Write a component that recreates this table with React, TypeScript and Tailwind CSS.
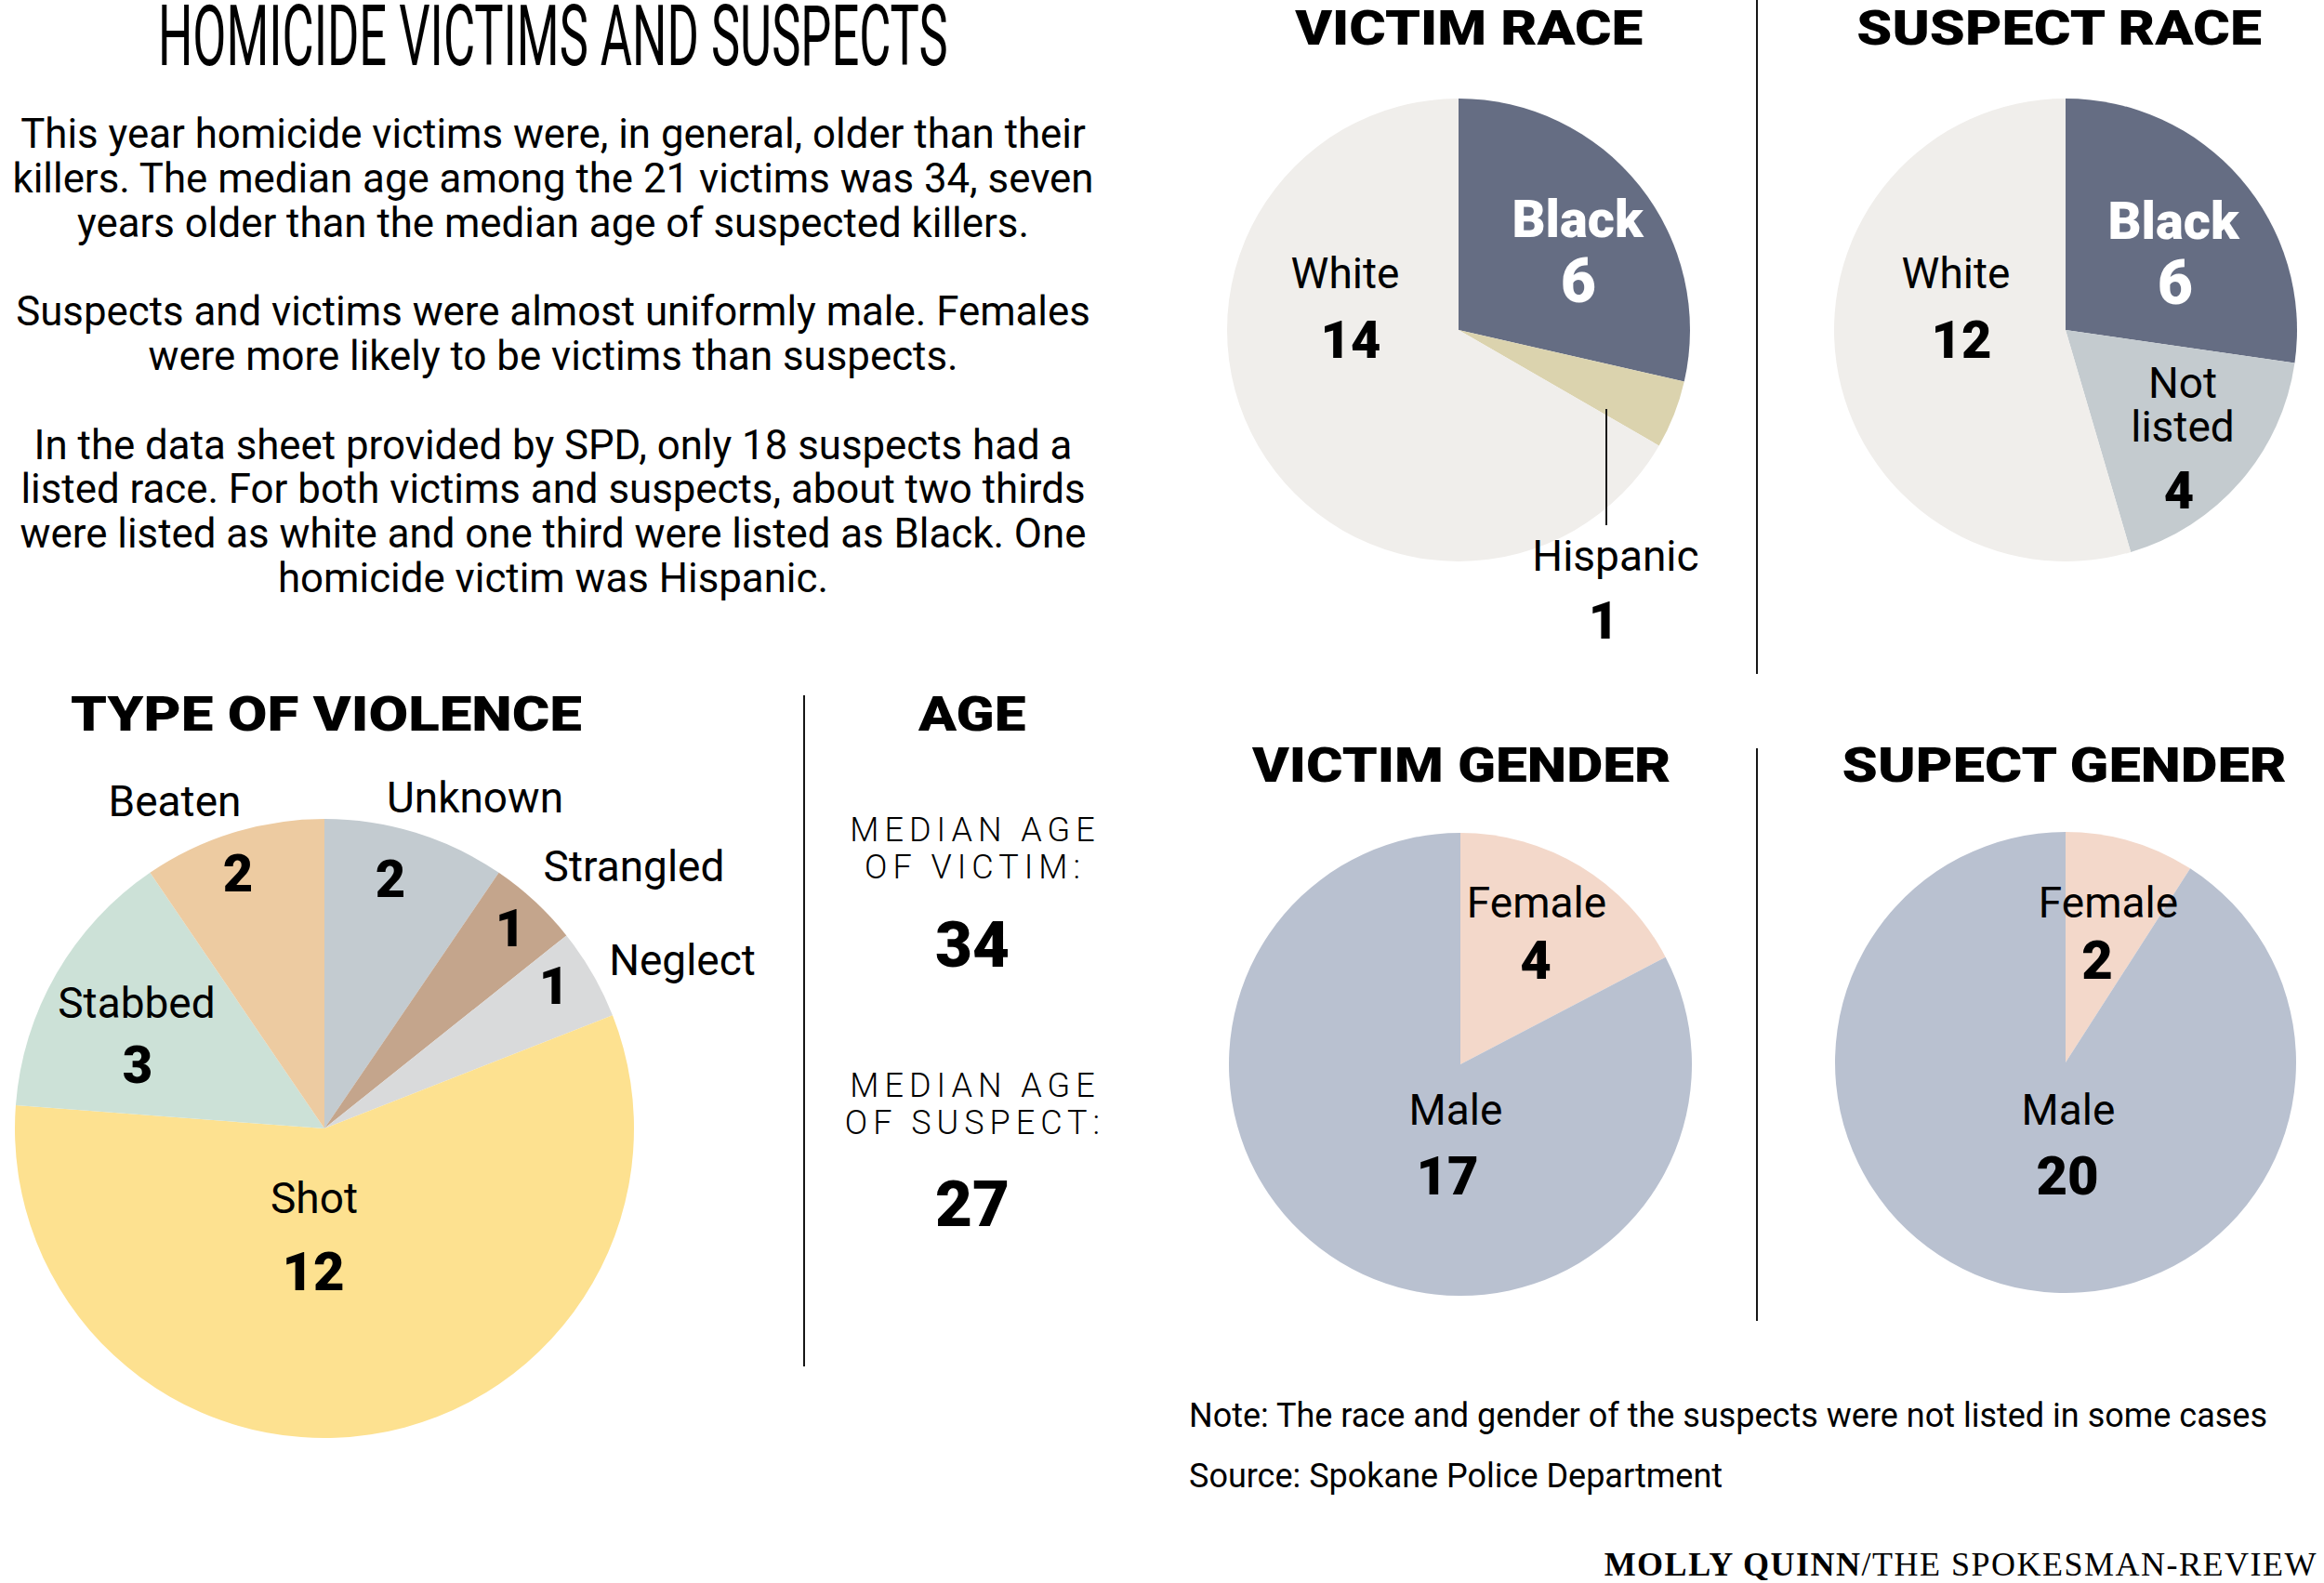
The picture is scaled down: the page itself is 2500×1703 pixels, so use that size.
import React from 'react'

type Slice = { deg: number; color: string }
type Label = { x: number; y: number; t: string | string[]; size?: number; bold?: boolean; white?: boolean }

const INK = '#161616'

function slicePath(cx: number, cy: number, r: number, a0: number, a1: number) {
  const rad = (a: number) => (a * Math.PI) / 180
  const x0 = cx + r * Math.sin(rad(a0))
  const y0 = cy - r * Math.cos(rad(a0))
  const x1 = cx + r * Math.sin(rad(a1))
  const y1 = cy - r * Math.cos(rad(a1))
  const large = a1 - a0 > 180 ? 1 : 0
  return `M${cx} ${cy}L${x0} ${y0}A${r} ${r} 0 ${large} 1 ${x1} ${y1}Z`
}

function PieChart({
  box,
  cx,
  cy,
  r,
  slices,
  labels,
  children,
}: {
  box: [number, number, number, number]
  cx: number
  cy: number
  r: number
  slices: Slice[]
  labels: Label[]
  children?: React.ReactNode
}) {
  let acc = 0
  return (
    <svg width={box[2]} height={box[3]} viewBox={box.join(' ')} className="block overflow-visible">
      {slices.map((s, i) => {
        const a0 = acc
        acc += s.deg
        return <path key={i} d={slicePath(cx, cy, r, a0, acc)} fill={s.color} />
      })}
      {children}
      {labels.map((l, i) => (
        <text
          key={i}
          x={l.x}
          y={l.y}
          textAnchor="middle"
          fontSize={l.size ?? (l.bold ? 56 : 46)}
          fontWeight={l.bold ? 900 : 400}
          fill={l.white ? '#ffffff' : '#000000'}
        >
          {Array.isArray(l.t)
            ? l.t.map((line, j) => (
                <tspan key={j} x={l.x} dy={j === 0 ? 0 : 47}>
                  {line}
                </tspan>
              ))
            : l.t}
        </text>
      ))}
    </svg>
  )
}

const u21 = 360 / 21
const u22 = 360 / 22

function Heading({ children, w, sx = 'scale-x-[1.16]' }: { children: React.ReactNode; w: string; sx?: string }) {
  return (
    <div className="flex justify-end">
      <h2 className={`${w} flex justify-center text-[52px] leading-[52px] font-black`}>
        <span className={`inline-block shrink-0 whitespace-nowrap ${sx}`}>{children}</span>
      </h2>
    </div>
  )
}

export default function App() {
  return (
    <div className="w-[2500px] h-[1703px] bg-white text-black flex overflow-hidden font-['Roboto','Noto_Sans',sans-serif]">
      {/* ── Left column ─────────────────────────────── */}
      <div className="w-[1190px] shrink-0 flex flex-col">
        <h1 className="h-[80px] flex justify-center text-[90px] leading-[80px] font-normal">
          <span className="inline-block shrink-0 whitespace-nowrap scale-x-[0.583]">HOMICIDE VICTIMS AND SUSPECTS</span>
        </h1>

        <div className="mt-[41px] text-[43.8px] leading-[47.8px] text-center whitespace-nowrap">
          <p>
            This year homicide victims were, in general, older than their
            <br />
            killers. The median age among the 21 victims was 34, seven
            <br />
            years older than the median age of suspected killers.
          </p>
          <p className="mt-[47.8px]">
            Suspects and victims were almost uniformly male. Females
            <br />
            were more likely to be victims than suspects.
          </p>
          <p className="mt-[47.8px]">
            In the data sheet provided by SPD, only 18 suspects had a
            <br />
            listed race. For both victims and suspects, about two thirds
            <br />
            were listed as white and one third were listed as Black. One
            <br />
            homicide victim was Hispanic.
          </p>
        </div>

        <div className="mt-[96px] flex">
          <div className="w-[864px] shrink-0 flex flex-col">
            <div className="flex">
              <Heading w="w-[702px]" sx="scale-x-[1.19]">
                TYPE OF VIOLENCE
              </Heading>
            </div>
            <div className="mt-[15px]">
              <PieChart
                box={[0, 810, 864, 745]}
                cx={349}
                cy={1214}
                r={333}
                slices={[
                  { deg: 2 * u21, color: '#c3cbd0' },
                  { deg: 1 * u21, color: '#c4a58c' },
                  { deg: 1 * u21, color: '#d9dadb' },
                  { deg: 12 * u21, color: '#fde190' },
                  { deg: 3 * u21, color: '#cce1d7' },
                  { deg: 2 * u21, color: '#edcba1' },
                ]}
                labels={[
                  { x: 188, y: 878, t: 'Beaten' },
                  { x: 256, y: 959, t: '2', bold: true },
                  { x: 511, y: 874, t: 'Unknown' },
                  { x: 420, y: 965, t: '2', bold: true },
                  { x: 682, y: 948, t: 'Strangled' },
                  { x: 549, y: 1018, t: '1', bold: true },
                  { x: 734, y: 1049, t: 'Neglect' },
                  { x: 596, y: 1080, t: '1', bold: true },
                  { x: 147, y: 1095, t: 'Stabbed' },
                  { x: 148, y: 1165, t: '3', bold: true },
                  { x: 338, y: 1305, t: 'Shot' },
                  { x: 337, y: 1388, t: '12', bold: true, size: 58 },
                ]}
              />
            </div>
          </div>

          <div className="w-[2px] h-[722px] mt-[5px] shrink-0 bg-[#161616]" />

          <div className="flex-1 flex justify-end">
            <div className="w-[288px] flex flex-col items-center text-center">
              <h2 className="w-full flex justify-center text-[52px] leading-[52px] font-black">
                <span className="inline-block scale-x-[1.16]">AGE</span>
              </h2>
              <p className="mt-[78px] pl-[6px] text-[36px] leading-[40px] tracking-[6px] font-light whitespace-nowrap">
                MEDIAN AGE
                <br />
                OF VICTIM:
              </p>
              <p className="mt-[29px] text-[69px] leading-[69px] font-black">34</p>
              <p className="mt-[97px] pl-[6px] text-[36px] leading-[40px] tracking-[6px] font-light whitespace-nowrap">
                MEDIAN AGE
                <br />
                OF SUSPECT:
              </p>
              <p className="mt-[33px] text-[69px] leading-[69px] font-black">27</p>
            </div>
          </div>
        </div>
      </div>

      {/* ── Right column ────────────────────────────── */}
      <div className="flex-1 flex flex-col">
        <div className="flex h-[725px]">
          <div className="w-[699px] shrink-0 flex flex-col">
            <div className="mt-[5px]">
              <Heading w="w-[618px]">VICTIM RACE</Heading>
            </div>
            <PieChart
              box={[1190, 57, 699, 668]}
              cx={1569}
              cy={355}
              r={249}
              slices={[
                { deg: 6 * u21, color: '#656d83' },
                { deg: 1 * u21, color: '#dbd3ae' },
                { deg: 14 * u21, color: '#f0eeeb' },
              ]}
              labels={[
                { x: 1697, y: 255, t: 'Black', bold: true, white: true },
                { x: 1698, y: 325, t: '6', bold: true, white: true, size: 66 },
                { x: 1447, y: 310, t: 'White' },
                { x: 1453, y: 385, t: '14', bold: true },
                { x: 1738, y: 614, t: 'Hispanic' },
                { x: 1725, y: 687, t: '1', bold: true },
              ]}
            >
              <line x1={1728} y1={440} x2={1728} y2={565} stroke={INK} strokeWidth={2} />
            </PieChart>
          </div>

          <div className="w-[2px] h-[725px] shrink-0 bg-[#161616]" />

          <div className="flex-1 flex flex-col">
            <div className="mt-[5px]">
              <Heading w="w-[570px]" sx="scale-x-[1.17]">
                SUSPECT RACE
              </Heading>
            </div>
            <PieChart
              box={[1891, 57, 609, 668]}
              cx={2222}
              cy={355}
              r={249}
              slices={[
                { deg: 6 * u22, color: '#656d83' },
                { deg: 4 * u22, color: '#c4cbcf' },
                { deg: 12 * u22, color: '#f0eeeb' },
              ]}
              labels={[
                { x: 2338, y: 257, t: 'Black', bold: true, white: true },
                { x: 2340, y: 327, t: '6', bold: true, white: true, size: 66 },
                { x: 2104, y: 310, t: 'White' },
                { x: 2110, y: 385, t: '12', bold: true },
                { x: 2348, y: 428, t: ['Not', 'listed'] },
                { x: 2344, y: 547, t: '4', bold: true },
              ]}
            />
          </div>
        </div>

        <div className="mt-[73px] flex">
          <div className="w-[699px] shrink-0 flex flex-col">
            <Heading w="w-[634px]">VICTIM GENDER</Heading>
            <PieChart
              box={[1190, 850, 699, 571]}
              cx={1571}
              cy={1145}
              r={249}
              slices={[
                { deg: 62.4, color: '#f3d8ca' },
                { deg: 297.6, color: '#b9c1d0' },
              ]}
              labels={[
                { x: 1653, y: 987, t: 'Female' },
                { x: 1652, y: 1053, t: '4', bold: true, size: 58 },
                { x: 1566, y: 1210, t: 'Male' },
                { x: 1557, y: 1285, t: '17', bold: true, size: 58 },
              ]}
            />
          </div>

          <div className="w-[2px] h-[616px] mt-[7px] shrink-0 bg-[#161616]" />

          <div className="flex-1 flex flex-col">
            <Heading w="w-[558px]" sx="scale-x-[1.18]">
              SUPECT GENDER
            </Heading>
            <PieChart
              box={[1891, 850, 609, 571]}
              cx={2222}
              cy={1143}
              r={248}
              slices={[
                { deg: 2 * u22, color: '#f3d8ca' },
                { deg: 20 * u22, color: '#b9c1d0' },
              ]}
              labels={[
                { x: 2268, y: 987, t: 'Female' },
                { x: 2256, y: 1053, t: '2', bold: true, size: 58 },
                { x: 2225, y: 1210, t: 'Male' },
                { x: 2224, y: 1285, t: '20', bold: true, size: 58 },
              ]}
            />
          </div>
        </div>

        <div className="mt-[70px] pl-[89px] text-[36px] leading-[65px] whitespace-nowrap">
          <p>Note: The race and gender of the suspects were not listed in some cases</p>
          <p>Source: Spokane Police Department</p>
        </div>

        <p className="mt-[42px] pr-[7px] text-right text-[36px] leading-[40px] tracking-[1.5px] whitespace-nowrap font-['Liberation_Serif','Times_New_Roman',serif]">
          <span className="font-bold">MOLLY QUINN</span>/THE SPOKESMAN-REVIEW
        </p>
      </div>
    </div>
  )
}
